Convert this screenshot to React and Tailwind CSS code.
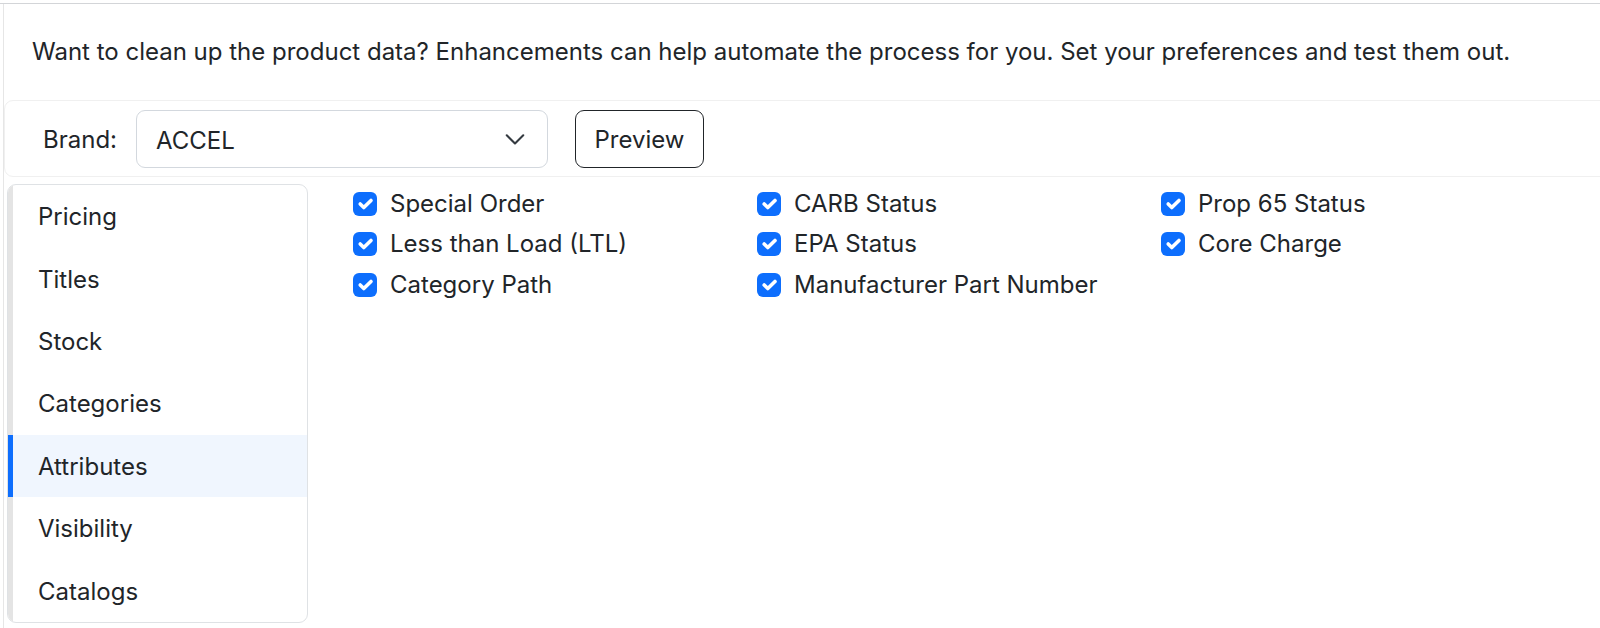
import React from "react";

const navItems = ["Pricing", "Titles", "Stock", "Categories", "Attributes", "Visibility", "Catalogs"];

const attributes = [
  "Special Order",
  "CARB Status",
  "Prop 65 Status",
  "Less than Load (LTL)",
  "EPA Status",
  "Core Charge",
  "Category Path",
  "Manufacturer Part Number",
];

const CheckBox = () => (
  <span className="w-6 h-6 shrink-0 rounded-[6px] bg-[#0d6efd] flex items-center justify-center">
    <svg viewBox="0 0 20 20" className="w-6 h-6" fill="none">
      <path d="m6 10 3 3 6-6" stroke="#fff" strokeWidth="3" strokeLinecap="round" strokeLinejoin="round" />
    </svg>
  </span>
);

const App = () => {
  const active = "Attributes";
  return (
    <div
      className="w-[1600px] h-[628px] bg-white overflow-hidden text-[#212529]"
      style={{ fontFamily: "Inter, 'Noto Sans', sans-serif" }}
    >
      <div className="h-[4px] border-b border-[#d3d5d8]" />
      <div className="ml-[3px] border-l border-[#e6e6e6] h-[624px]">
        <p className="px-[28px] py-[30px] text-[24px] leading-[36px] whitespace-nowrap">
          Want to clean up the product data? Enhancements can help automate the process for you. Set your preferences and test them out.
        </p>

        <div className="w-[1640px] border border-[#f0f0f0] rounded-[9px] h-[77px] flex items-start pt-[9px] pl-[38px]">
          <div className="h-[58px] flex items-center pt-[2px] text-[24px] w-[93px]">Brand:</div>
          <div className="w-[412px] h-[58px] border border-[#d3d8de] rounded-[9px] flex items-center justify-between pl-[19px] pr-[20px] text-[24px]">
            <span className="pt-[3px]">ACCEL</span>
            <svg viewBox="0 0 16 16" className="w-6 h-6" fill="none">
              <path d="m2.5 5.5 5.5 5.5 5.5-5.5" stroke="#343a40" strokeWidth="1.4" strokeLinecap="round" strokeLinejoin="round" />
            </svg>
          </div>
          <button className="ml-[27px] w-[129px] h-[58px] border border-[#212529] rounded-[9px] text-[24px] pt-[2px] flex items-center justify-center">
            Preview
          </button>
        </div>

        <div className="flex pt-[7px] pl-[3px]">
          <div className="w-[301px] h-[439px] border border-[#dfe2e5] rounded-[9px] overflow-hidden flex flex-col shrink-0">
            {navItems.map((item) => (
              <div
                key={item}
                className={
                  item === active
                    ? "h-[62.4px] flex items-center pl-[25px] pt-[2px] text-[24px] border-l-[5px] border-[#0d6efd] bg-[#f0f6fe]"
                    : "h-[62.4px] flex items-center pl-[25px] pt-[2px] text-[24px] border-l-[5px] border-[#e4e4e4]"
                }
              >
                {item}
              </div>
            ))}
          </div>

          <div className="ml-[45px] pt-[2px] grid grid-cols-[404px_404px_404px] auto-rows-[40.33px] content-start">
            {attributes.map((attr) => (
              <div key={attr} className="h-9 flex items-center gap-[13px] text-[24px] leading-[36px]">
                <CheckBox />
                <span>{attr}</span>
              </div>
            ))}
          </div>
        </div>
      </div>
    </div>
  );
};

export default App;
